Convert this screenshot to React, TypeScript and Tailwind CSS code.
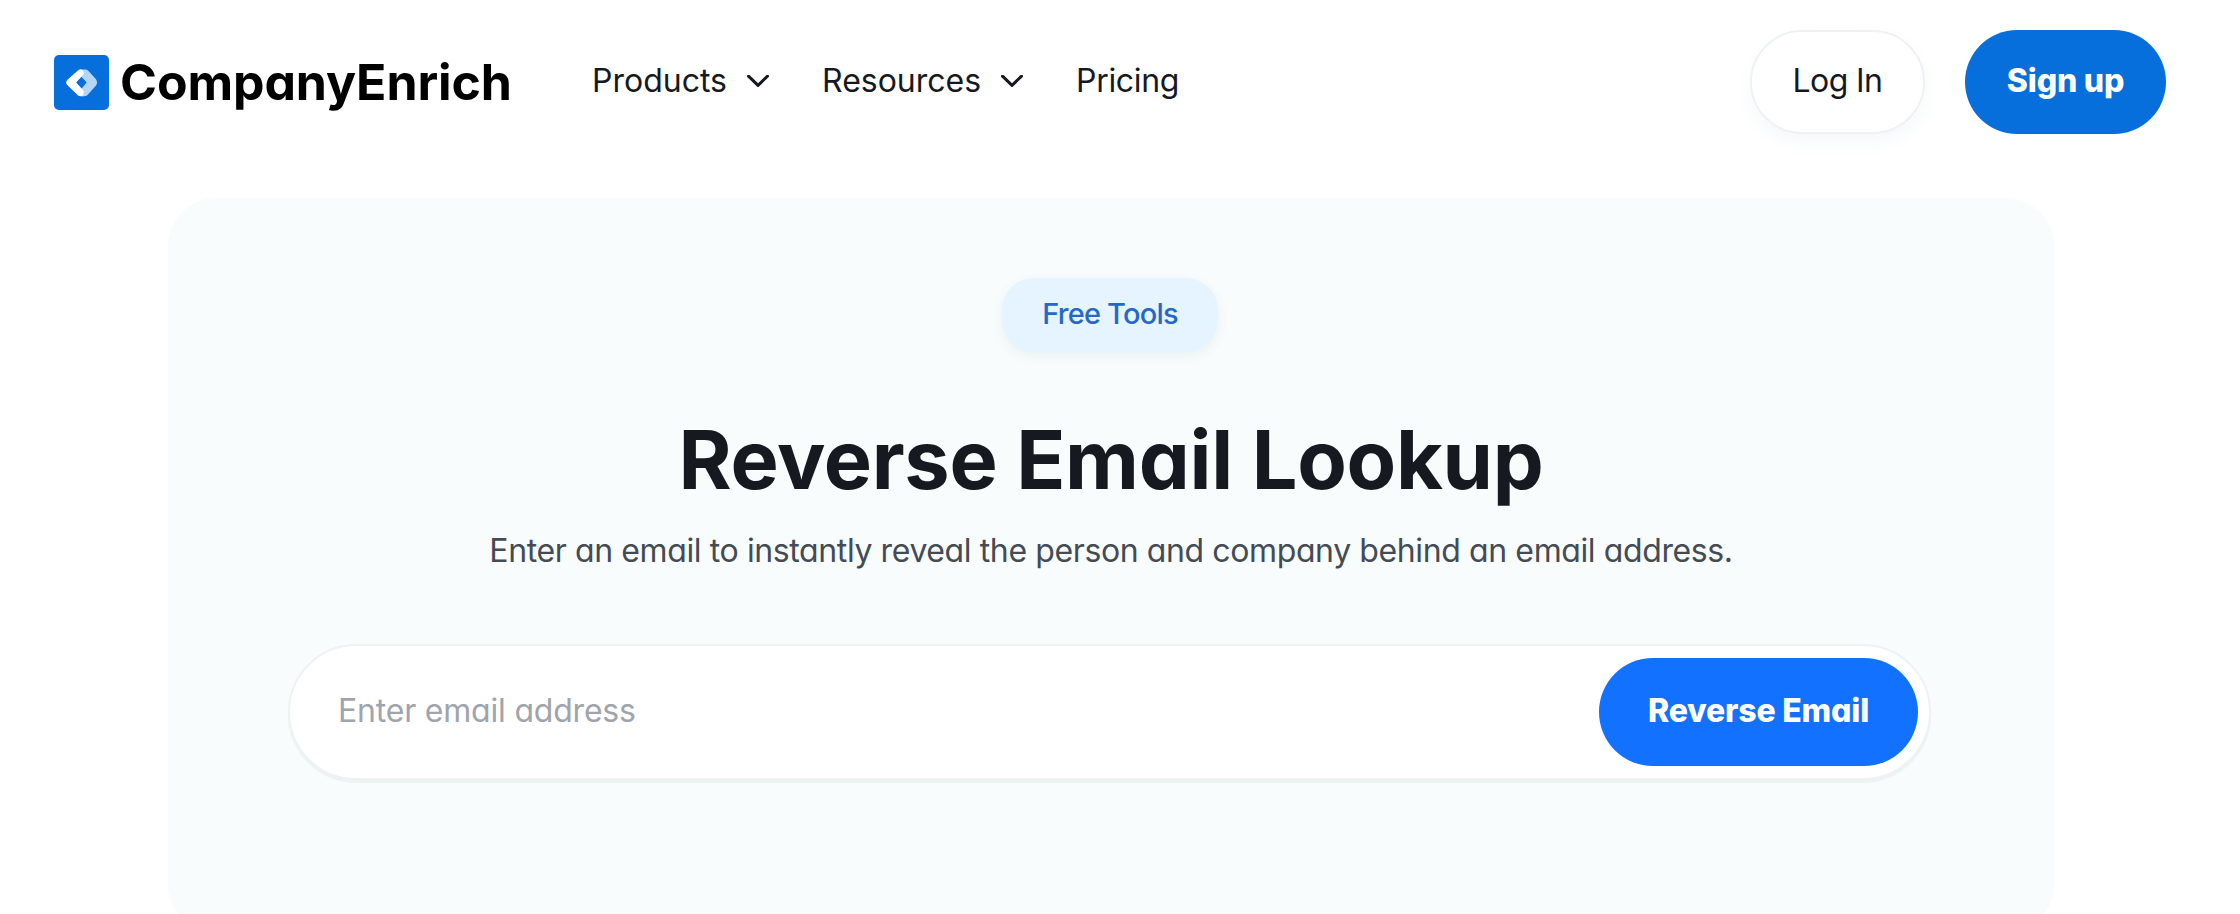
const NAV_ITEMS = [
  { label: 'Products', menu: true, className: 'w-[177px]' },
  { label: 'Resources', menu: true, className: 'w-[201px]' },
  { label: 'Pricing', menu: false, className: 'w-[104px] tracking-[-0.3px]' },
];

function LogoMark() {
  return (
    <svg viewBox="0 0 55 55" className="h-[55px] w-[55px] shrink-0" aria-hidden="true">
      <rect width="55" height="55" rx="5" fill="#066fdb" />
      <path
        d="M28 14.5 L31.5 14.5 Q33 14.5 34.2 15.7 L42 24.2 Q44 27.5 42 30.5 L34.2 39.3 Q33 41 31.5 41 L28 41.5 L25 37 L32.5 27.5 L25 19 Z"
        fill="#b5d6fb"
      />
      <path
        d="M24.5 15 Q26.5 13.4 28.6 15 Q31 17.5 28.8 20.2 L22.2 27.5 L28.8 34.8 Q31 37.5 28.6 40.4 Q26.5 42 24.2 40.6 L13.2 30 Q11.2 27.5 13.2 25 Z"
        fill="#ffffff"
      />
      <path d="M27.5 22.5 L32.3 27.5 L27.5 32.5 L22.7 27.5 Z" fill="#066fdb" />
    </svg>
  );
}

function Chevron() {
  return (
    <svg viewBox="0 0 22 12" className="h-3 w-[22px]" fill="none" aria-hidden="true">
      <path
        d="M1.5 1.2 L11 10.4 L20.5 1.2"
        stroke="#16191f"
        strokeWidth="3"
        strokeLinecap="round"
        strokeLinejoin="round"
      />
    </svg>
  );
}

function Header() {
  return (
    <header className="flex h-[164px] items-center pr-[74px] pl-[54px]">
      <a href="#" className="flex items-center gap-[11px]">
        <LogoMark />
        <span className="w-[390px] text-[50px] leading-[55px] font-bold tracking-[-0.1px] text-black">
          CompanyEnrich
        </span>
      </a>
      <nav className="ml-[82px] flex items-center gap-[53px] pb-0.5">
        {NAV_ITEMS.map((item) => (
          <a
            key={item.label}
            href="#"
            className={`flex items-center justify-between text-[32px] leading-[40px] whitespace-nowrap ${item.className}`}
          >
            {item.label}
            {item.menu && <Chevron />}
          </a>
        ))}
      </nav>
      <div className="ml-auto flex items-center gap-10">
        <button
          type="button"
          className="h-[104px] w-[175px] rounded-full border-2 border-[#edf2f4] bg-white pb-0.5 text-[32px] tracking-[-0.6px] shadow-[0_8px_16px_rgba(120,160,180,0.07)]"
        >
          Log In
        </button>
        <button
          type="button"
          className="h-[104px] w-[201px] rounded-full bg-[#066fdb] pb-0.5 text-[32px] font-extrabold tracking-[-0.2px] text-white"
        >
          Sign up
        </button>
      </div>
    </header>
  );
}

function LookupForm() {
  return (
    <form
      className="mt-[73px] mr-[3px] flex h-[136px] w-[1643px] items-center rounded-full border-2 border-[#edf2f3] bg-white pr-[11px] pl-[48px] shadow-[0_3px_1px_#edf2f3]"
      onSubmit={(e) => e.preventDefault()}
    >
      <input
        type="email"
        placeholder="Enter email address"
        className="min-w-0 flex-1 bg-transparent pb-0.5 text-[32px] tracking-[-0.2px] outline-none placeholder:text-[#a0a4ad]"
      />
      <button
        type="submit"
        className="h-[108px] w-[319px] rounded-full bg-[#1272ff] pb-0.5 text-[32px] font-extrabold tracking-[-0.2px] text-white"
      >
        Reverse Email
      </button>
    </form>
  );
}

export default function App() {
  return (
    <div className="h-[914px] overflow-hidden bg-white font-['Inter',sans-serif] text-[#16191f] [font-feature-settings:'cv11']">
      <Header />
      <main className="mt-[34px] ml-[168px] flex h-[735px] w-[1886px] flex-col items-center rounded-[48px] bg-[#f8fcfd] pt-20">
        <span className="mr-0.5 flex h-[74px] w-[216px] items-center justify-center rounded-[32px] bg-[#e6f4ff] pb-0.5 text-[29px] font-medium tracking-[-0.8px] text-[#2569c8] shadow-[0_4px_12px_rgba(60,80,90,0.07)]">
          Free Tools
        </span>
        <h1 className="mt-[58px] text-[81px] leading-[100px] font-bold tracking-[-0.3px] whitespace-nowrap">
          Reverse Email Lookup
        </h1>
        <p className="mt-[21px] text-[32px] leading-[40px] tracking-[-0.39px] whitespace-nowrap text-[#444b55]">
          Enter an email to instantly reveal the person and company behind an email address.
        </p>
        <LookupForm />
      </main>
    </div>
  );
}
